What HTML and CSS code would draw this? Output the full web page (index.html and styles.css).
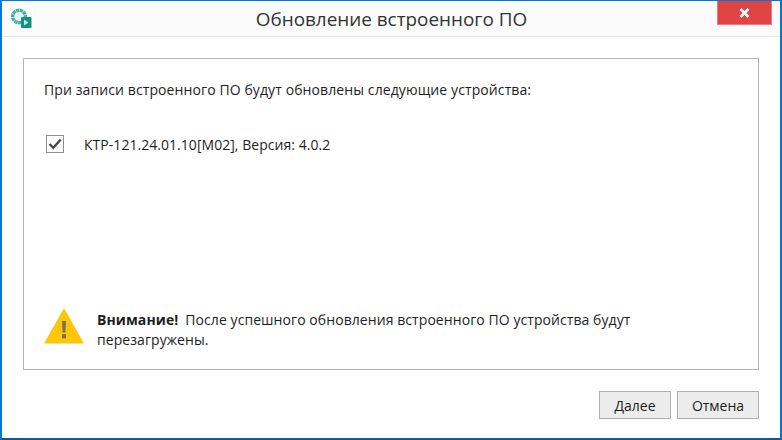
FILE: index.html
```html
<!DOCTYPE html>
<html lang="ru">
<head>
<meta charset="utf-8">
<title>Обновление встроенного ПО</title>
<link rel="stylesheet" href="styles.css">
</head>
<body>
<div class="window">
  <header class="titlebar">
    <svg class="app-icon" width="24" height="24" viewBox="0 0 24 24">
      <rect width="24" height="24" rx="3" fill="#fff"/>
      <circle cx="10" cy="10.500" r="6.300" fill="none" stroke="#45afa3" stroke-width="3.400" stroke-dasharray="3.200 .5"/>
      <circle cx="10" cy="10.500" r="3" fill="#e3f4f1"/>
      <rect x="12" y="11" width="10.500" height="11" rx="1" fill="#14917f"/>
      <path d="M15 13.500v6l4.500-3z" fill="#bfe6e0"/>
    </svg>
    <h1 class="title">Обновление встроенного ПО</h1>
    <button class="close" aria-label="Закрыть">
      <svg width="11" height="10" viewBox="0 0 11 10"><path d="M1.500 1l8 8M9.500 1l-8 8" stroke="#fff" stroke-width="2.600"/></svg>
    </button>
  </header>
  <main class="content">
    <section class="panel">
      <p class="intro">При записи встроенного ПО будут обновлены следующие устройства:</p>
      <div class="device">
        <span class="check">
          <svg width="14" height="12" viewBox="0 0 14 12"><path d="M1.500 6l3.800 3.800L12.700 1.500" fill="none" stroke="#444" stroke-width="2.300"/></svg>
        </span>
        <span class="device-name">КТР-121.24.01.10[М02], Версия: 4.0.2</span>
      </div>
      <div class="notice">
        <svg class="warn" width="40" height="36" viewBox="0 0 40 36">
          <path d="M20 0L40 35.500H0z" fill="#fdc60a"/>
          <path d="M18 13h4l-.6 11.500h-2.800z" fill="#7b7151"/>
          <rect x="18" y="26" width="4" height="4.500" rx=".8" fill="#7b7151"/>
        </svg>
        <p class="notice-text"><strong class="attention">Внимание!</strong>После успешного обновления встроенного ПО устройства будут перезагружены.</p>
      </div>
    </section>
    <footer class="actions">
      <button class="btn btn-next">Далее</button>
      <button class="btn btn-cancel">Отмена</button>
    </footer>
  </main>
</div>
</body>
</html>
```
FILE: styles.css
```css
* { box-sizing: border-box; }
html, body { margin: 0; height: 100%; }
body { font-family: "Open Sans", "Noto Sans", sans-serif; font-size: 14px; letter-spacing: .1px; color: #1e1e1e; background: #fff; }
.window {
  width: 782px; height: 440px; display: flex; flex-direction: column;
  border-style: solid; border-color: #0078d7; border-width: 1px 2px 2px 2px; border-bottom-color: #0a5a9c;
  background: #fff;
}
.titlebar {
  height: 36px; flex: none; display: flex; align-items: flex-start; position: relative;
  background: #fbfbfb; border-bottom: 1px solid #e3e3e3;
}
.app-icon { margin: 5px 0 0 7px; flex: none; }
.title {
  position: absolute; left: 1px; right: 0; top: 0; margin: 0; text-align: center;
  font-size: 18.900px; letter-spacing: 0; font-weight: 400; line-height: 37px; color: #333;
}
.close {
  position: absolute; top: 0; right: 8px; width: 55px; height: 24px; padding: 0; border: 1px solid #ec7a7c; border-top: 0;
  background: #e04343; display: flex; align-items: center; justify-content: center;
}
.content { flex: 1; display: flex; flex-direction: column; padding: 21px 21px 0; }
.panel {
  height: 312px; flex: none; border: 1px solid #b4b4b4; padding: 21px 20px 0; display: flex; flex-direction: column;
}
.intro { margin: 0; line-height: 20px; }
.device { display: flex; align-items: center; margin-top: 34px; height: 20px; }
.device-name { letter-spacing: .04px; }
.check {
  width: 18px; height: 18px; border: 1px solid #8e8e8e; display: flex; align-items: center; justify-content: center;
  margin: 0 20px 0 2px; background: #fff;
}
.notice { margin-top: auto; margin-bottom: 19px; display: flex; align-items: flex-start; height: 42px; }
.warn { flex: none; margin-right: 13px; }
.notice-text { margin: 0; padding-top: 2px; width: 560px; line-height: 20px; letter-spacing: .07px; }
.attention { margin-right: 7px; }
.actions { display: flex; justify-content: flex-end; gap: 6px; padding-top: 21px; }
.btn {
  font: inherit; height: 28px; padding: 0; border: 1px solid #b0b0b0; background: #ececec; color: #1e1e1e;
}
.btn-next { width: 72px; }
.btn-cancel { width: 82px; }
```
